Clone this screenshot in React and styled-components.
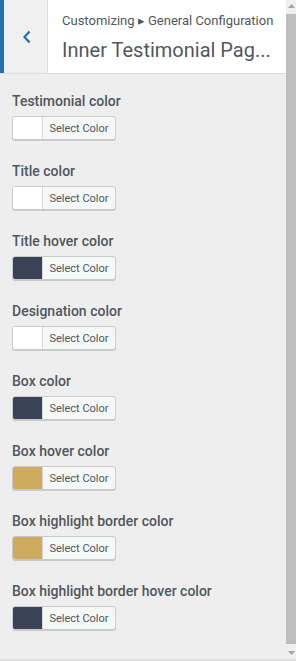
import React from 'react';
import styled, { createGlobalStyle } from 'styled-components';

const Global = createGlobalStyle`
  html, body {
    margin: 0;
    padding: 0;
    background: #eeeeee;
  }
  * {
    box-sizing: border-box;
  }
`;

const Frame = styled.div`
  display: flex;
  width: 296px;
  height: 661px;
  overflow: hidden;
  border-bottom: 2px solid #dcdcde;
  font-family: Roboto, "Liberation Sans", sans-serif;
  background: #eeeeee;
`;

const Panel = styled.div`
  flex: 0 0 286px;
  display: flex;
  flex-direction: column;
`;

const Header = styled.div`
  display: flex;
  height: 74px;
  background: #fff;
  border-bottom: 1px solid #dcdcde;
`;

const Back = styled.div`
  flex: 0 0 48px;
  display: flex;
  align-items: center;
  justify-content: center;
  padding-left: 2px;
  background: #f0f0f1;
  border-left: 4px solid #2271b1;
  border-right: 1px solid #dcdcde;
  color: #2271b1;
`;

const Titles = styled.div`
  display: flex;
  flex-direction: column;
  padding: 12px 0 0 14px;
  min-width: 0;
  color: #50575e;
`;

const Crumb = styled.div`
  font-size: 13px;
  line-height: 18px;
`;

const Title = styled.div`
  margin-top: 8px;
  font-size: 20px;
  line-height: 24px;
  white-space: nowrap;
`;

const List = styled.div`
  display: flex;
  flex-direction: column;
  padding: 17px 12px 0;
`;

const Control = styled.div`
  display: flex;
  flex-direction: column;
  align-items: flex-start;
  gap: 5px;
  margin-bottom: 21px;
`;

const Label = styled.div`
  font-size: 14px;
  line-height: 20px;
  font-weight: 500;
  color: #50575e;
`;

const Picker = styled.div`
  display: flex;
  height: 24px;
  width: 104px;
  border: 1px solid #c9cacc;
  border-radius: 3px;
  overflow: hidden;
  box-shadow: 0 1px 0 #c9cacc;
  background: #f6f7f7;
`;

const Swatch = styled.span`
  flex: 0 0 30px;
  background: ${p => p.$color};
  border-right: 1px solid #d5d6d8;
`;

const SelectText = styled.span`
  flex: 1;
  display: flex;
  align-items: center;
  justify-content: center;
  font-size: 11px;
  color: #50575e;
`;

const Scrollbar = styled.div`
  flex: 0 0 10px;
  display: flex;
  flex-direction: column;
  align-items: center;
  background: #efefef;
`;

const Arrow = styled.div`
  flex: 0 0 12px;
  display: flex;
  align-items: center;
  justify-content: center;
`;

const Thumb = styled.div`
  flex: 1;
  width: 10px;
  margin: 2px 0 3px;
  background: #bdbdbd;
`;

const fields = [
  ['Testimonial color', '#ffffff'],
  ['Title color', '#ffffff'],
  ['Title hover color', '#3a4356'],
  ['Designation color', '#ffffff'],
  ['Box color', '#3a4356'],
  ['Box hover color', '#cfab5d'],
  ['Box highlight border color', '#cfab5d'],
  ['Box highlight border hover color', '#3a4356'],
];

function Tri({ down }) {
  return (
    <svg width="7" height="4" viewBox="0 0 7 4">
      <path d={down ? 'M0 0H7L3.5 4Z' : 'M0 4H7L3.5 0Z'} fill="#a3a3a3" />
    </svg>
  );
}

export default function App() {
  return (
    <Frame>
      <Global />
      <Panel>
        <Header>
          <Back>
            <svg width="10" height="14" viewBox="0 0 10 14">
              <path d="M7.5 1.5L2.5 7l5 5.5" fill="none" stroke="currentColor" strokeWidth="2.2" />
            </svg>
          </Back>
          <Titles>
            <Crumb>Customizing ▸ General Configuration</Crumb>
            <Title>Inner Testimonial Pag...</Title>
          </Titles>
        </Header>
        <List>
          {fields.map(([label, color]) => (
            <Control key={label}>
              <Label>{label}</Label>
              <Picker>
                <Swatch $color={color} />
                <SelectText>Select Color</SelectText>
              </Picker>
            </Control>
          ))}
        </List>
      </Panel>
      <Scrollbar>
        <Arrow><Tri /></Arrow>
        <Thumb />
        <Arrow><Tri down /></Arrow>
      </Scrollbar>
    </Frame>
  );
}
